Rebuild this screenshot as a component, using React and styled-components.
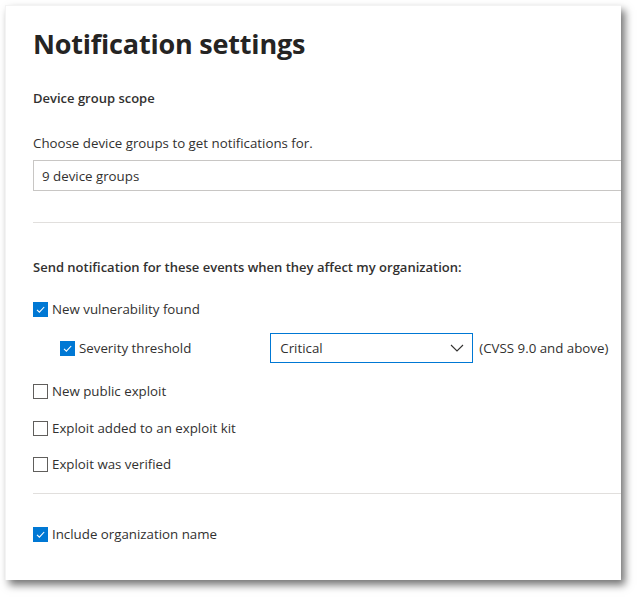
import React from "react";
import styled, { createGlobalStyle } from "styled-components";

const Global = createGlobalStyle`
  html, body { margin: 0; padding: 0; background: #ffffff; }
  body { font-family: "Open Sans", "Noto Sans", sans-serif; color: #323130; }
  * { box-sizing: border-box; }
`;

const Page = styled.div`
  width: 640px;
  height: 599px;
  padding: 5px 0 0 5px;
`;

const Panel = styled.div`
  width: 616px;
  height: 575px;
  background: #fff;
  border-top: 1px solid #f3f3f3;
  border-left: 1px solid #f3f3f3;
  box-shadow: 4px 5px 8px rgba(0, 0, 0, 0.55);
  overflow: hidden;
  padding: 20px 0 0 27px;
  display: flex;
  flex-direction: column;
`;

const Title = styled.h1`
  margin: 0;
  font-size: 27px;
  font-weight: 700;
  letter-spacing: -0.2px;
  line-height: 36px;
  color: #252423;
`;

const SectionLabel = styled.div`
  font-size: 13px;
  font-weight: 600;
  line-height: 18px;
  margin-top: ${(p) => p.$mt}px;
`;

const Text = styled.div`
  font-size: 13.3px;
  line-height: 18px;
  margin-top: ${(p) => p.$mt || 0}px;
`;

const Input = styled.div`
  margin-top: 8px;
  width: 640px;
  height: 31px;
  border: 1px solid #c8c6c4;
  display: flex;
  align-items: center;
  padding-left: 8px;
  font-size: 13.3px;
`;

const Divider = styled.div`
  height: 1px;
  background: #e1dfdd;
  width: 640px;
  margin-top: ${(p) => p.$mt}px;
`;

const Row = styled.div`
  display: flex;
  align-items: center;
  height: ${(p) => p.$h || 20}px;
  margin-top: ${(p) => p.$mt}px;
  padding-left: ${(p) => p.$indent || 0}px;
`;

const Box = styled.span`
  width: 15px;
  height: 15px;
  flex: none;
  border: 1px solid ${(p) => (p.$checked ? "#0078d4" : "#605e5c")};
  background: ${(p) => (p.$checked ? "#0078d4" : "#fff")};
  display: inline-flex;
  align-items: center;
  justify-content: center;
  margin-right: 4px;
`;

const Label = styled.span`
  font-size: 13.3px;
  line-height: 18px;
  white-space: nowrap;
`;

const Select = styled.div`
  margin-left: 79px;
  width: 203px;
  height: 30px;
  border: 1px solid #0078d4;
  display: flex;
  align-items: center;
  justify-content: space-between;
  padding: 0 8px 0 9px;
  font-size: 13.3px;
`;

const Hint = styled.span`
  font-size: 13.3px;
  margin-left: 6px;
  white-space: nowrap;
`;

const Check = ({ checked }) => (
  <Box $checked={checked}>
    {checked && (
      <svg width="11" height="11" viewBox="0 0 11 11">
        <path d="M2 5.8 L4.4 8.2 L9.2 3" fill="none" stroke="#fff" strokeWidth="1.1" />
      </svg>
    )}
  </Box>
);

const Option = ({ checked, children, mt, indent }) => (
  <Row $mt={mt} $indent={indent}>
    <Check checked={checked} />
    <Label>{children}</Label>
  </Row>
);

export default function App() {
  return (
    <>
      <Global />
      <Page>
        <Panel>
          <Title>Notification settings</Title>
          <SectionLabel $mt={27}>Device group scope</SectionLabel>
          <Text $mt={27}>Choose device groups to get notifications for.</Text>
          <Input>9 device groups</Input>
          <Divider $mt={31} />
          <SectionLabel $mt={35}>Send notification for these events when they affect my organization:</SectionLabel>
          <Option checked mt={23}>New vulnerability found</Option>
          <Row $mt={14} $indent={27} $h={30}>
            <Check checked />
            <Label>Severity threshold</Label>
            <Select>
              <span>Critical</span>
              <svg width="14" height="8" viewBox="0 0 14 8">
                <path d="M1 1 L7 7 L13 1" fill="none" stroke="#323130" strokeWidth="1.1" />
              </svg>
            </Select>
            <Hint>(CVSS 9.0 and above)</Hint>
          </Row>
          <Option mt={18}>New public exploit</Option>
          <Option mt={17}>Exploit added to an exploit kit</Option>
          <Option mt={16}>Exploit was verified</Option>
          <Divider $mt={19} />
          <Option checked mt={30}>Include organization name</Option>
        </Panel>
      </Page>
    </>
  );
}
